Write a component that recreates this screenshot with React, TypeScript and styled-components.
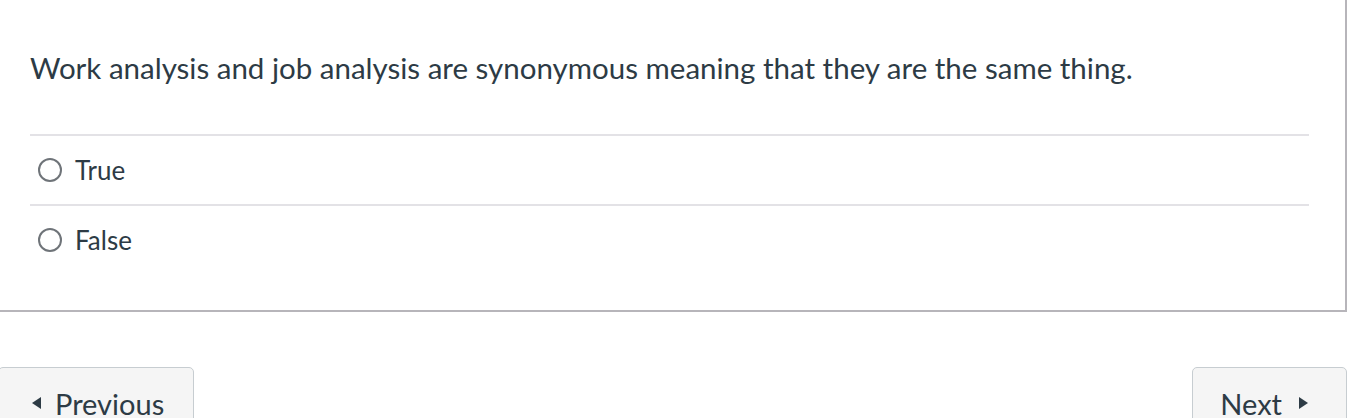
import * as React from 'react';
import styled, { createGlobalStyle } from 'styled-components';

const GlobalStyle = createGlobalStyle`
  html, body {
    margin: 0;
    padding: 0;
    background: #ffffff;
    font-family: Lato, "Open Sans", "Liberation Sans", sans-serif;
    color: #2d3b45;
    overflow: hidden;
  }
`;

const Page = styled.div`
  width: 1358px;
  height: 418px;
  overflow: hidden;
`;

const QuestionPanel = styled.div`
  margin: -2px 0 0 -2px;
  width: 1349px;
  box-sizing: border-box;
  height: 314px;
  border: 2px solid #b7b5ba;
  background: #ffffff;
  padding: 0 36px 0 30px;
`;

const QuestionText = styled.div`
  padding-top: 50px;
  font-size: 29.5px;
  line-height: 1.2;
  padding-bottom: 49px;
`;

const AnswerList = styled.div`
  border-top: 2px solid #e3e2e6;
`;

const AnswerRow = styled.label<{ last?: boolean }>`
  display: flex;
  align-items: center;
  height: 68px;
  border-bottom: ${({ last }) => (last ? 'none' : '2px solid #e3e2e6')};
  font-size: 26px;
  cursor: pointer;
`;

const Radio = styled.span`
  width: 20px;
  height: 20px;
  border: 2px solid #6f7479;
  border-radius: 50%;
  margin: 0 13px 0 8px;
  flex: 0 0 auto;
`;

const Footer = styled.div`
  display: flex;
  justify-content: space-between;
  margin-top: 55px;
  width: 1349px;
  margin-left: -2px;
`;

const NavButton = styled.button<{ side: 'left' | 'right' }>`
  display: flex;
  align-items: center;
  gap: ${({ side }) => (side === 'left' ? '14px' : '17px')};
  height: 62px;
  box-sizing: border-box;
  padding: ${({ side }) => (side === 'left' ? '10px 29px 0 33px' : '10px 38px 0 27px')};
  background: #f5f5f5;
  border: 1px solid #c7cdd1;
  border-radius: 5px;
  font-family: Lato, "Open Sans", "Liberation Sans", sans-serif;
  font-size: 29px;
  color: #2d3b45;
  align-self: flex-start;
`;

const Caret = styled.svg`
  width: 9px;
  height: 12px;
  fill: #2d3b45;
  flex: 0 0 auto;
`;

export default function App() {
  return (
    <Page>
      <GlobalStyle />
      <QuestionPanel>
        <QuestionText>
          Work analysis and job analysis are synonymous meaning that they are the same thing.
        </QuestionText>
        <AnswerList>
          <AnswerRow>
            <Radio />
            True
          </AnswerRow>
          <AnswerRow last>
            <Radio />
            False
          </AnswerRow>
        </AnswerList>
      </QuestionPanel>
      <Footer>
        <NavButton side="left">
          <Caret viewBox="0 0 9 12">
            <path d="M9 0 L0 6 L9 12 Z" />
          </Caret>
          Previous
        </NavButton>
        <NavButton side="right">
          Next
          <Caret viewBox="0 0 9 12">
            <path d="M0 0 L9 6 L0 12 Z" />
          </Caret>
        </NavButton>
      </Footer>
    </Page>
  );
}
